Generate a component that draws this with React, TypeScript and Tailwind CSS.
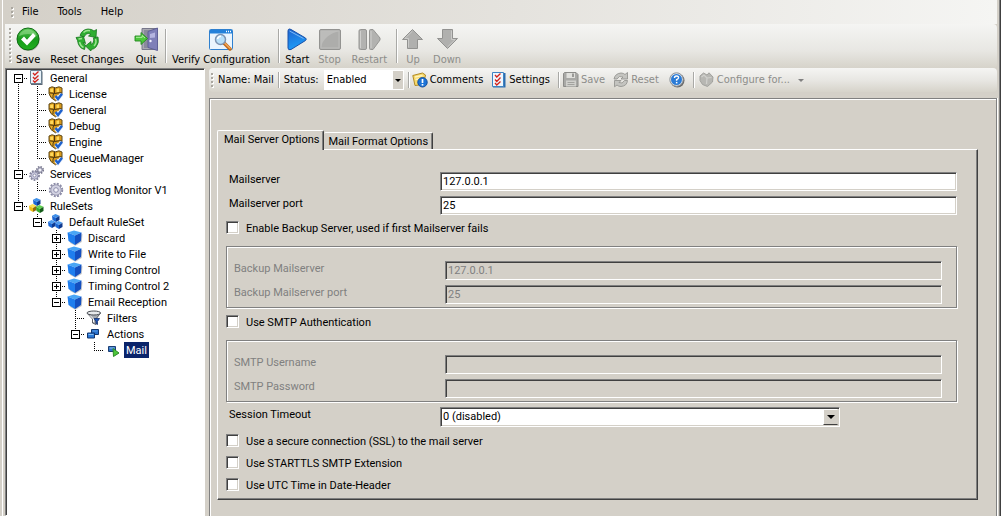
import React from 'react';

type IconProps = { size?: number };

const SaveIcon: React.FC = () => (
  <svg width="24" height="24" viewBox="0 0 24 24" aria-hidden="true">
    <defs>
      <linearGradient id="okGreen" x1="0" y1="0" x2="0" y2="1">
        <stop offset="0" stopColor="#5fc95a" />
        <stop offset="0.5" stopColor="#189a1c" />
        <stop offset="1" stopColor="#22b01f" />
      </linearGradient>
    </defs>
    <circle cx="12.500" cy="13" r="11" fill="#8b8b86" opacity="0.6" />
    <circle cx="12" cy="12" r="11" fill="url(#okGreen)" stroke="#0f6d14" strokeWidth="1" />
    <path d="M3 9 Q5 3 12 2.500 Q19 3 21 9 Q12 5 3 9 Z" fill="#a5e29d" opacity="0.5" />
    <path d="M5 12.500 L8 9.500 L11 12.800 L17 6 L19.800 9 L11 18.500 Z" fill="#fff" />
  </svg>
);

const RecycleIcon: React.FC = () => (
  <svg width="24" height="24" viewBox="0 0 24 24" aria-hidden="true">
    <g transform="translate(1 1)" fill="#2fae31" stroke="#17751d" strokeWidth="0.8" strokeLinejoin="round">
      <path d="M4 7.500 Q6 1.500 12 1 Q16 1 18 3 L20.500 1.500 L20 9.500 L12.500 8 L14.800 6.300 Q10.500 3.800 8 9 Z" />
      <path d="M17.500 9.800 L22 9 Q23.500 15 20 19 Q18 21.200 15 21.500 L15 23.200 L9.500 18 L15 13.500 V16.500 Q18.500 15 17.500 9.800 Z" />
      <path d="M0 9.500 L7.500 8.500 L9.500 15.500 L7 14.500 Q7.500 16.200 9.500 17 L8.500 21.500 Q2.500 20 1.500 12.500 Z" />
    </g>
    <path d="M8.500 5.500 Q11 3 15 3.800 M20.500 12 Q22 16 19 19 M3.500 12 L7 11.500 M4.500 15 Q5.500 19 8.500 20.500" fill="none" stroke="#9be58f" strokeWidth="1.500" />
  </svg>
);

const QuitIcon: React.FC = () => (
  <svg width="24" height="24" viewBox="0 0 24 24" aria-hidden="true">
    <path d="M8 1.500 H23 V22.500 H8 Z" fill="#a9a9b2" stroke="#77778a" />
    <path d="M10 3 H21 V21 H10 Z" fill="#8a8a9c" />
    <path d="M14 4.500 L23.500 1 V23.500 L14 20.500 Z" fill="#7f7fb8" stroke="#5a5a92" strokeWidth="0.900" />
    <path d="M16 7 L21 5.500 V10.500 L16 11 Z" fill="#b5b5e0" />
    <circle cx="16.500" cy="14" r="1.200" fill="#f2f2ff" />
    <path d="M1 9 H7 V5.500 L13.500 11.500 L7 17.500 V14 H1 Z" fill="#4cc63c" stroke="#25881f" strokeWidth="0.900" />
    <path d="M2 10.300 H8.200 V8.500 L11 11" stroke="#b0f0a0" fill="none" />
  </svg>
);

const VerifyIcon: React.FC = () => (
  <svg width="24" height="24" viewBox="0 0 24 24" aria-hidden="true">
    <rect x="0.500" y="2.500" width="23" height="20" rx="1" fill="#eaf5fe" stroke="#2f80cf" />
    <rect x="1" y="3" width="22" height="3.500" fill="#2381da" />
    <path d="M17 4.500 H18 M19 4.500 H20 M21 4.500 H22" stroke="#fff" strokeWidth="1.500" />
    <path d="M15 16 L21 22" stroke="#c06a1c" strokeWidth="3.500" strokeLinecap="round" />
    <path d="M15.500 16 L21 21.300" stroke="#f3a85a" strokeWidth="1.500" strokeLinecap="round" />
    <circle cx="11.500" cy="12.500" r="5" fill="#b7e0fa" stroke="#7d94b2" strokeWidth="1.500" />
    <path d="M8.500 12 Q9 9.500 12 9.300" stroke="#fff" strokeWidth="1.500" fill="none" />
  </svg>
);

const PlayIcon: React.FC = () => (
  <svg width="24" height="24" viewBox="0 0 24 24" aria-hidden="true">
    <defs>
      <linearGradient id="playBlue" x1="0" y1="0" x2="0.300" y2="1">
        <stop offset="0" stopColor="#1f63d0" />
        <stop offset="1" stopColor="#1c9cf8" />
      </linearGradient>
    </defs>
    <path d="M4.500 2 Q3 2 3 4 V21 Q3 23.500 6 22.500 L20.500 13.500 Q22 12 20.500 11 L6 2.500 Z" fill="url(#playBlue)" stroke="#1850a8" />
    <path d="M4.500 4 L18.500 11.500" stroke="#7db8f4" strokeWidth="1" />
  </svg>
);

const StopIcon: React.FC = () => (
  <svg width="24" height="24" viewBox="0 0 24 24" aria-hidden="true">
    <rect x="1.500" y="2.500" width="21" height="20" rx="1.500" fill="#adadab" stroke="#939391" />
    <path d="M3 4 H21 Q6 8 3 20 Z" fill="#bcbcba" />
    <rect x="3" y="4" width="18" height="17" fill="none" stroke="#bdbdbb" />
  </svg>
);

const RestartIcon: React.FC = () => (
  <svg width="24" height="24" viewBox="0 0 24 24" aria-hidden="true">
    <rect x="2" y="2.500" width="7.500" height="20" rx="1.500" fill="#b2b2b0" stroke="#959593" />
    <path d="M13.500 2.500 H16 L23 11 V13 L16 22.500 H13.500 Q12.500 22.500 12.500 21.500 V3.500 Q12.500 2.500 13.500 2.500 Z" fill="#b2b2b0" stroke="#959593" />
    <path d="M3.500 4 V21 M14 4 V21" stroke="#cfcfcd" />
  </svg>
);

const ArrowIcon: React.FC<{ down?: boolean }> = ({ down }) => (
  <svg width="24" height="24" viewBox="0 0 24 24" aria-hidden="true" className={down ? 'rotate-180' : ''}>
    <path d="M11.500 2.500 L21.500 12.500 H16.500 V21.500 H6.500 V12.500 H1.500 Z" fill="#b0b0ae" stroke="#929290" />
    <path d="M11.500 4 L3.800 11.500 H7.500 V20.500" fill="none" stroke="#cbcbc9" />
  </svg>
);

const ChecklistIcon: React.FC<IconProps> = ({ size = 16 }) => (
  <svg width={size} height={size} viewBox="0 0 16 16" aria-hidden="true">
    <path d="M2 1.500 H13.500 V15 H2 Z" fill="#5b6675" />
    <path d="M1.500 0.500 H12.500 V13.500 H1.500 Z" fill="#e9f3fb" stroke="#6b8090" />
    <path d="M4 3 L5.800 5 L9.500 1.500 M4 7 L5.800 9 L9.500 5.500 M4 10.500 L5.800 12.300 L9.500 9" fill="none" stroke="#d3241c" strokeWidth="1.300" />
  </svg>
);

const SettingsIcon: React.FC = () => (
  <svg width="16" height="16" viewBox="0 0 16 16" aria-hidden="true">
    <path d="M2 1 H14.500 V15.500 H2 Z" fill="#2c6cae" />
    <path d="M1.500 0.500 H12.500 V14.500 H1.500 Z" fill="#eef6fd" stroke="#3d83c4" />
    <path d="M4 3 L5.800 5 L9.500 1.500 M4 7.500 L5.800 9.500 L9.500 5.500 M4 11 L5.800 13 L9.500 9.500" fill="none" stroke="#d3241c" strokeWidth="1.300" />
  </svg>
);

const ShieldIcon: React.FC = () => (
  <svg width="16" height="16" viewBox="0 0 16 16" aria-hidden="true">
    <path d="M1 2 L4 0.800 L7.500 1.800 L11 0.800 L14 2 V7.500 Q13.500 12 7.500 14.800 Q1.800 12 1 7.500 Z" fill="#d9991a" stroke="#5f4a1c" />
    <path d="M2.200 3 L5 2.200 V6 H2.200 Z M8.500 3 L11 2.300 V6 H8.500 Z" fill="#ffd95a" />
    <path d="M2.500 8.500 H5 L6 12 Q3 10.500 2.500 8.500 Z" fill="#f0b93a" />
    <path d="M6.500 2 V7 L5 9 V12 M1.500 6.800 L6.500 7.500 L13.500 6.500" fill="none" stroke="#4b3810" strokeWidth="1" />
    <path d="M8 10.500 L10 12.800 L13.800 8" fill="none" stroke="#e8eefa" strokeWidth="4.200" />
    <path d="M7.500 10 L10 13 L14 7.800" fill="none" stroke="#1f62cc" strokeWidth="2.500" />
  </svg>
);

const GearIcon: React.FC = () => (
  <svg width="16" height="16" viewBox="0 0 16 16" aria-hidden="true">
    <circle cx="8" cy="8" r="6.200" fill="none" stroke="#8d8da8" strokeWidth="2" strokeDasharray="2 1.250" />
    <circle cx="8" cy="8" r="5.200" fill="#d2d2e2" stroke="#9a9ab2" />
    <circle cx="8" cy="8" r="2.300" fill="#f4f4fa" stroke="#8f8fac" />
  </svg>
);

const GearsIcon: React.FC = () => (
  <svg width="16" height="16" viewBox="0 0 16 16" aria-hidden="true">
    <circle cx="11" cy="4" r="3.300" fill="none" stroke="#77778c" strokeWidth="1.500" strokeDasharray="1.500 1.100" />
    <circle cx="11" cy="4" r="2.400" fill="#cfcfdd" stroke="#80809a" />
    <circle cx="11" cy="4" r="1" fill="#fff" />
    <circle cx="5.500" cy="9.500" r="4.500" fill="none" stroke="#80809a" strokeWidth="1.800" strokeDasharray="1.800 1.200" />
    <circle cx="5.500" cy="9.500" r="3.600" fill="#cdcde0" stroke="#9494ae" />
    <circle cx="5.500" cy="9.500" r="1.500" fill="#fff" stroke="#8f8fac" />
  </svg>
);

const Cube: React.FC<{ x: number; y: number; top: string; left: string; right: string }> = ({ x, y, top, left, right }) => (
  <g transform={`translate(${x} ${y})`}>
    <path d="M0 1.800 L3.500 0 L7.500 1.800 L4 4 Z" fill={top} />
    <path d="M0 1.800 L4 4 V8 L0.500 6 Z" fill={left} />
    <path d="M7.500 1.800 L4 4 V8 L7.500 6 Z" fill={right} />
  </g>
);

const RuleSetsIcon: React.FC = () => (
  <svg width="16" height="16" viewBox="0 0 16 16" aria-hidden="true">
    <Cube x={4} y={0} top="#3f8fe8" left="#1c68d4" right="#0f3a90" />
    <Cube x={0} y={6} top="#ffe14f" left="#efbd18" right="#8f6a0a" />
    <Cube x={7} y={7} top="#62d150" left="#35ab2c" right="#135c18" />
  </svg>
);

const RuleSetIcon: React.FC = () => (
  <svg width="16" height="16" viewBox="0 0 16 16" aria-hidden="true">
    <Cube x={4} y={0} top="#3f8fe8" left="#1c68d4" right="#0f3a90" />
    <Cube x={0} y={6} top="#4c9bee" left="#1c68d4" right="#0f3a90" />
    <Cube x={7} y={7} top="#4c9bee" left="#1c68d4" right="#0f3a90" />
  </svg>
);

const RuleIcon: React.FC = () => (
  <svg width="16" height="16" viewBox="0 0 16 16" aria-hidden="true">
    <path d="M2 4 L8 7 L15.500 4 L14.800 12 L8.500 15.800 L3 13 Z" fill="#9a9a9a" opacity="0.500" />
    <path d="M0.500 2.500 L7 0.500 L14.500 2.500 L8 5.500 Z" fill="#4aa6f5" />
    <path d="M0.500 2.500 L8 5.500 V15 L1.500 11 Z" fill="#1f7eee" />
    <path d="M14.500 2.500 L8 5.500 V15 L14 11 Z" fill="#1450c0" />
  </svg>
);

const FilterIcon: React.FC = () => (
  <svg width="16" height="16" viewBox="0 0 16 16" aria-hidden="true">
    <path d="M1 3 L6.500 9 V13 L10 14.500 V9 L14.500 3 Z" fill="#a9adb3" stroke="#50545a" strokeWidth="0.900" />
    <ellipse cx="7.800" cy="3" rx="6.800" ry="2" fill="#e8eaec" stroke="#4a4e54" />
    <path d="M4 5.500 L7.500 9 V12" stroke="#fff" fill="none" />
    <path d="M8 8.500 H13.500 L11.500 11.500 V14.500 L10 13.500 V11.500 Z" fill="#1f56b8" stroke="#142f6a" strokeWidth="0.800" />
  </svg>
);

const ActionsIcon: React.FC = () => (
  <svg width="16" height="16" viewBox="0 0 16 16" aria-hidden="true">
    <path d="M5.500 3.500 H12.500 V8.500 H5.500 Z" fill="#2871ce" stroke="#12366f" />
    <path d="M6.500 5 H11.500" stroke="#5a9ce4" />
    <path d="M1.500 7 H8.500 V12 H1.500 Z" fill="#2b79d8" stroke="#12366f" />
    <path d="M2.500 8.500 H7.500" stroke="#86c0f4" />
  </svg>
);

const MailActionIcon: React.FC = () => (
  <svg width="16" height="16" viewBox="0 0 16 16" aria-hidden="true">
    <path d="M3.500 4.500 H10.500 V9.500 H3.500 Z" fill="#2f74c6" stroke="#1c3d73" />
    <path d="M4.500 6 H9.500" stroke="#8cc3f3" />
    <path d="M8 6.500 L14 11 L8.500 14.500 Z" fill="#4cc63a" stroke="#2c8a28" />
  </svg>
);

const CommentsIcon: React.FC = () => (
  <svg width="16" height="16" viewBox="0 0 16 16" aria-hidden="true">
    <path d="M0.800 3.500 L10.500 1 L13.500 3 L11.500 12.500 L3 13.500 Z" fill="#f7d96b" stroke="#b08a25" />
    <path d="M3 5 L10.500 3.500 M3.500 7.500 L7 7" stroke="#fff4bd" strokeWidth="1.300" />
    <circle cx="10.500" cy="10.300" r="4.700" fill="#1d74d8" stroke="#0f4c9c" />
    <path d="M10.500 7 V11" stroke="#fff" strokeWidth="1.700" />
    <path d="M10.500 12 V13.600" stroke="#fff" strokeWidth="1.700" />
  </svg>
);

const DiskIcon: React.FC = () => (
  <svg width="16" height="16" viewBox="0 0 16 16" aria-hidden="true">
    <path d="M1.500 0.500 H13 L15 2.500 V14.500 H0.500 V1.500 Z" fill="#a9a9a6" stroke="#8c8c89" />
    <rect x="3.500" y="1" width="8.500" height="5" fill="#e0e0dc" />
    <rect x="9" y="1.500" width="2" height="3.500" fill="#999996" />
    <rect x="3" y="8.500" width="10" height="6" fill="#d0d0cc" />
    <path d="M4.500 10.500 H11.500 M4.500 12.500 H11.500" stroke="#a2a29e" />
  </svg>
);

const RefreshIcon: React.FC = () => (
  <svg width="16" height="16" viewBox="0 0 16 16" aria-hidden="true">
    <g fill="#c4c4c0" stroke="#8e8e8a" strokeWidth="0.800">
      <path d="M1 7 Q2 1.500 8 1 Q10.500 1 12 2.500 L14.500 0.500 V7 H8 L10 5 Q6 3 4 7 Z" />
      <path d="M14.500 8.500 Q14 14 8 14.500 Q5.500 14.500 4 13 L1.500 14.800 V8.500 H8 L6 10.500 Q9.500 12.500 11.500 8.500 Z" />
    </g>
  </svg>
);

const HelpIcon: React.FC = () => (
  <svg width="16" height="16" viewBox="0 0 16 16" aria-hidden="true">
    <circle cx="8.500" cy="8.500" r="7" fill="#6a6a6a" />
    <circle cx="7.500" cy="7.500" r="6.700" fill="#e4e6e8" stroke="#8c9298" />
    <circle cx="7.500" cy="7.500" r="5.500" fill="#2b7bd6" />
    <path d="M5.500 6 Q5.500 4 7.500 4 Q9.700 4 9.500 5.900 Q9.300 7 7.600 7.600 V8.800" fill="none" stroke="#fff" strokeWidth="1.400" />
    <rect x="6.900" y="9.900" width="1.500" height="1.500" fill="#fff" />
  </svg>
);

const ConfigureIcon: React.FC = () => (
  <svg width="16" height="16" viewBox="0 0 16 16" aria-hidden="true">
    <path d="M1 4 L4.500 1 L8 3 L10 0.800 L14 5 L13.500 10 L8.500 14.500 L3.500 12.500 L1 8.500 Z" fill="#b7b7b3" stroke="#a2a29e" />
    <path d="M2.500 5 L5 3 L8 6 L7.500 12" fill="none" stroke="#d0d0cc" strokeWidth="1.300" />
    <path d="M8 6 L12.500 5.500" stroke="#d0d0cc" strokeWidth="1.200" />
  </svg>
);

const Grip: React.FC<{ dots: number }> = ({ dots }) => (
  <div className="flex flex-col gap-0.5" aria-hidden="true">
    {Array.from({ length: dots }, (_, i) => (
      <span key={i} className="h-0.5 w-0.5 bg-[#aaa7a0] shadow-[1px_1px_0_#ffffff]" />
    ))}
  </div>
);

const Separator: React.FC<{ className: string }> = ({ className }) => (
  <div className={'w-0.5 shrink-0 border-l border-r border-l-[#a9a9a6] border-r-white ' + className} />
);

interface ToolButtonProps {
  label: string;
  icon: React.ReactNode;
  disabled?: boolean;
  narrow?: boolean;
}

const ToolButton: React.FC<ToolButtonProps> = ({ label, icon, disabled, narrow }) => (
  <button
    type="button"
    disabled={disabled}
    className={
      narrow
        ? 'flex flex-col items-center px-[3px] whitespace-nowrap disabled:text-[#8d8d8a]'
        : 'flex flex-col items-center px-[5px] whitespace-nowrap disabled:text-[#8d8d8a]'
    }
  >
    {icon}
    <span className="h-[17px] leading-[17px]">{label}</span>
  </button>
);

const SmallButton: React.FC<ToolButtonProps> = ({ label, icon, disabled }) => (
  <button
    type="button"
    disabled={disabled}
    className="flex items-center gap-0.5 whitespace-nowrap disabled:text-[#8d8d8a]"
  >
    {icon}
    <span>{label}</span>
  </button>
);

// v: full vertical, t: branch, l: last branch, space: nothing
// f / m / e: expanded box (first, middle, end), p: collapsed box
type TreeRow = { cells: string; label: string; icon: React.ReactNode; selected?: boolean };

const treeRows: TreeRow[] = [
  { cells: 'f', label: 'General', icon: <ChecklistIcon /> },
  { cells: 'vt', label: 'License', icon: <ShieldIcon /> },
  { cells: 'vt', label: 'General', icon: <ShieldIcon /> },
  { cells: 'vt', label: 'Debug', icon: <ShieldIcon /> },
  { cells: 'vt', label: 'Engine', icon: <ShieldIcon /> },
  { cells: 'vl', label: 'QueueManager', icon: <ShieldIcon /> },
  { cells: 'm', label: 'Services', icon: <GearsIcon /> },
  { cells: 'vl', label: 'Eventlog Monitor V1', icon: <GearIcon /> },
  { cells: 'e', label: 'RuleSets', icon: <RuleSetsIcon /> },
  { cells: ' e', label: 'Default RuleSet', icon: <RuleSetIcon /> },
  { cells: '  p', label: 'Discard', icon: <RuleIcon /> },
  { cells: '  p', label: 'Write to File', icon: <RuleIcon /> },
  { cells: '  p', label: 'Timing Control', icon: <RuleIcon /> },
  { cells: '  p', label: 'Timing Control 2', icon: <RuleIcon /> },
  { cells: '  e', label: 'Email Reception', icon: <RuleIcon /> },
  { cells: '   t', label: 'Filters', icon: <FilterIcon /> },
  { cells: '   e', label: 'Actions', icon: <ActionsIcon /> },
  { cells: '    l', label: 'Mail', icon: <MailActionIcon />, selected: true },
];

const TreeCell: React.FC<{ kind: string }> = ({ kind }) => (
  <span className="relative h-4 w-[19px] shrink-0" aria-hidden="true">
    {'vtlmep'.includes(kind) && (
      <span className="absolute top-0 left-[9px] h-2 w-px bg-[repeating-linear-gradient(to_bottom,#000_0_1px,transparent_1px_2px)]" />
    )}
    {'vtfmp'.includes(kind) && (
      <span className="absolute top-2 left-[9px] h-2 w-px bg-[repeating-linear-gradient(to_bottom,#000_0_1px,transparent_1px_2px)]" />
    )}
    {'tlfmep'.includes(kind) && (
      <span className="absolute top-2 left-[9px] h-px w-2.5 bg-[repeating-linear-gradient(to_right,#000_0_1px,transparent_1px_2px)]" />
    )}
    {'fmep'.includes(kind) && (
      <span className="absolute top-1 left-[5px] h-[9px] w-[9px] border border-black bg-white">
        <span className="absolute top-[3px] left-px h-px w-[5px] bg-black" />
        {kind === 'p' && <span className="absolute top-px left-[3px] h-[5px] w-px bg-black" />}
      </span>
    )}
  </span>
);

const Tree: React.FC = () => (
  <nav
    aria-label="Configuration"
    className="w-[200px] shrink-0 border border-t-[#808080] border-r-white border-b-white border-l-[#808080] bg-white pt-px pl-px shadow-[inset_1px_1px_0_#404040]"
  >
    <ul className="pl-0.5">
      {treeRows.map((row, i) => (
        <li key={i} className="flex h-4 items-center">
          {row.cells.split('').map((kind, c) => (
            <TreeCell key={c} kind={kind} />
          ))}
          <span className="w-5 shrink-0 pl-px">{row.icon}</span>
          <a
            href="#"
            className={
              row.selected
                ? 'bg-[#0a246a] px-0.5 pt-px leading-[15px] whitespace-nowrap text-white'
                : 'px-0.5 pt-px leading-[15px] whitespace-nowrap'
            }
          >
            {row.label}
          </a>
        </li>
      ))}
    </ul>
  </nav>
);

interface FieldProps {
  id: string;
  label: string;
  value?: string;
  type?: string;
  disabled?: boolean;
}

const Field: React.FC<FieldProps> = ({ id, label, value = '', type = 'text', disabled }) => (
  <div className="flex items-start">
    <label htmlFor={id} className={disabled ? 'w-[211px] shrink-0 leading-[15px] text-[#808080]' : 'w-[211px] shrink-0 leading-[15px]'}>
      {label}
    </label>
    <input
      id={id}
      type={type}
      defaultValue={value}
      disabled={disabled}
      className="h-[19px] min-w-0 flex-1 border border-t-[#808080] border-r-white border-b-white border-l-[#808080] bg-white px-0.5 leading-4 shadow-[inset_1px_1px_0_#404040,inset_-1px_-1px_0_#d4d0c8] outline-none disabled:bg-[#d4d0c8] disabled:text-[#808080]"
    />
  </div>
);

const Checkbox: React.FC<{ label: string }> = ({ label }) => (
  <label className="flex h-4 items-start gap-[7px]">
    <input
      type="checkbox"
      className="mt-px h-[13px] w-[13px] shrink-0 appearance-none border border-t-[#808080] border-r-white border-b-white border-l-[#808080] bg-white shadow-[inset_1px_1px_0_#404040,inset_-1px_-1px_0_#d4d0c8]"
    />
    <span className="leading-[17px]">{label}</span>
  </label>
);

const Group: React.FC<{ label: string; children: React.ReactNode }> = ({ label, children }) => (
  <fieldset
    aria-label={label}
    className="mt-2.5 flex flex-col gap-[5px] border border-[#808080] pt-3.5 pr-3.5 pb-[3px] pl-[7px] shadow-[1px_1px_0_#ffffff,inset_1px_1px_0_#ffffff]"
  >
    {children}
  </fieldset>
);

const MailForm: React.FC = () => (
  <div className="border-t border-r border-b border-l border-t-white border-r-[#404040] border-b-[#404040] border-l-white pt-[22px] pr-5 pb-1.5 pl-2 font-['Roboto','Liberation_Sans',sans-serif] shadow-[inset_-1px_-1px_0_#808080]">
    <div className="flex flex-col gap-[5px] pl-[3px]">
      <Field id="mailserver" label="Mailserver" value="127.0.0.1" />
      <Field id="mailserver-port" label="Mailserver port" value="25" />
    </div>
    <div className="mt-[5px]">
      <Checkbox label="Enable Backup Server, used if first Mailserver fails" />
    </div>
    <Group label="Backup Mailserver">
      <Field id="backup" label="Backup Mailserver" value="127.0.0.1" disabled />
      <Field id="backup-port" label="Backup Mailserver port" value="25" disabled />
    </Group>
    <div className="mt-1.5">
      <Checkbox label="Use SMTP Authentication" />
    </div>
    <Group label="SMTP Authentication">
      <Field id="smtp-user" label="SMTP Username" disabled />
      <Field id="smtp-pass" label="SMTP Password" type="password" disabled />
    </Group>
    <div className="mt-[5px] flex items-start pl-[3px]">
      <label htmlFor="timeout" className="w-[211px] shrink-0 leading-[15px]">
        Session Timeout
      </label>
      <div className="relative w-[400px]">
        <select
          id="timeout"
          className="block h-5 w-full appearance-none border border-t-[#808080] border-r-white border-b-white border-l-[#808080] bg-white px-0.5 leading-[18px] shadow-[inset_1px_1px_0_#404040,inset_-1px_-1px_0_#d4d0c8]"
        >
          <option>0 (disabled)</option>
        </select>
        <span className="pointer-events-none absolute top-0.5 right-0.5 flex h-4 w-[15px] items-center justify-center border border-t-white border-r-[#d4d0c8] border-b-[#404040] border-l-white bg-[#d4d0c8]">
          <span className="border-x-4 border-t-4 border-x-transparent border-t-black" />
        </span>
      </div>
    </div>
    <div className="mt-1.5 flex flex-col gap-1.5">
      <Checkbox label="Use a secure connection (SSL) to the mail server" />
      <Checkbox label="Use STARTTLS SMTP Extension" />
      <Checkbox label="Use UTC Time in Date-Header" />
    </div>
  </div>
);

const App: React.FC = () => {
  return (
    <div className="min-h-screen bg-white pr-0.5 font-['DejaVu_Sans_Condensed','DejaVu_Sans',sans-serif] text-[11px] text-black">
      <div className="flex min-h-screen border-r border-[#404040] bg-[#d4d0c8] pl-0.5">
        <div className="flex min-w-0 flex-1 flex-col border-r border-l border-r-[#808080] border-l-white pr-0.5 pl-0.5">
          <header>
            <nav className="flex h-6 items-center gap-[19px] bg-linear-to-r from-[#d4d0c8] to-[#f5f5f3] pl-1.5">
              <div className="-mr-2.5">
                <Grip dots={3} />
              </div>
              <button type="button">File</button>
              <button type="button">Tools</button>
              <button type="button">Help</button>
            </nav>
            <div className="flex h-11 items-start rounded-r bg-linear-to-b from-[#f5f5f3] via-[#e8e7e3] via-60% to-[#d6d3ca] pt-[3px] pl-1">
              <div className="pt-px">
                <Grip dots={9} />
              </div>
              <ToolButton label="Save" icon={<SaveIcon />} />
              <ToolButton label="Reset Changes" icon={<RecycleIcon />} />
              <ToolButton label="Quit" icon={<QuitIcon />} />
              <Separator className="mt-0.5 ml-0.5 h-[34px]" />
              <ToolButton label="Verify Configuration" icon={<VerifyIcon />} />
              <Separator className="mt-0.5 ml-[3px] h-[34px]" />
              <ToolButton label="Start" icon={<PlayIcon />} />
              <ToolButton label="Stop" icon={<StopIcon />} disabled narrow />
              <div className="w-0.5" />
              <ToolButton label="Restart" icon={<RestartIcon />} disabled />
              <Separator className="mt-0.5 ml-1 h-[34px]" />
              <ToolButton label="Up" icon={<ArrowIcon />} disabled narrow />
              <ToolButton label="Down" icon={<ArrowIcon down />} disabled />
            </div>
          </header>

          <div className="flex flex-1">
            <div className="flex font-['Roboto','Liberation_Sans',sans-serif]">
              <Tree />
            </div>

            <main className="ml-1 flex min-w-0 flex-1 flex-col">
              <div className="flex h-6 items-center rounded bg-linear-to-b from-[#f5f5f3] via-[#e8e7e3] to-[#d6d3ca] pl-0.5">
                <Grip dots={4} />
                <span className="ml-[5px] whitespace-nowrap">Name: Mail</span>
                <Separator className="ml-1 h-4" />
                <label htmlFor="status" className="ml-1">
                  Status:
                </label>
                <div className="relative ml-[5px] w-20">
                  <select id="status" className="block h-5 w-full appearance-none bg-white pl-[3px] leading-5">
                    <option>Enabled</option>
                  </select>
                  <span className="pointer-events-none absolute top-px right-px flex h-[18px] w-2.5 items-center justify-center bg-[#d4d0c8]">
                    <span className="border-x-[3px] border-t-[3px] border-x-transparent border-t-black" />
                  </span>
                </div>
                <Separator className="mr-0.5 ml-1 h-4" />
                <SmallButton label="Comments" icon={<CommentsIcon />} />
                <div className="w-2" />
                <SmallButton label="Settings" icon={<SettingsIcon />} />
                <Separator className="mr-[3px] ml-2 h-4" />
                <SmallButton label="Save" icon={<DiskIcon />} disabled />
                <div className="w-2" />
                <SmallButton label="Reset" icon={<RefreshIcon />} disabled />
                <button type="button" aria-label="Help" className="ml-2.5">
                  <HelpIcon />
                </button>
                <Separator className="mr-1 ml-2 h-4" />
                <SmallButton label="Configure for..." icon={<ConfigureIcon />} disabled />
                <span className="ml-2 border-x-[3px] border-t-[3px] border-x-transparent border-t-[#808080]" />
              </div>

              <div className="mt-1.5 flex-1 border-t border-r border-l border-[#808080] pt-[31px] pr-[18px] pl-[7px] shadow-[1px_0_0_#ffffff,inset_1px_1px_0_#ffffff]">
                <div role="tablist" className="flex items-end">
                  <button
                    type="button"
                    role="tab"
                    aria-selected="true"
                    className="relative -mb-px h-5 rounded-t-xs border-t border-r border-l border-t-white border-r-[#404040] border-l-white bg-[#d4d0c8] pr-1 pl-1.5 font-['Roboto','Liberation_Sans',sans-serif] whitespace-nowrap shadow-[inset_-1px_0_0_#808080]"
                  >
                    Mail Server Options
                  </button>
                  <button
                    type="button"
                    role="tab"
                    aria-selected="false"
                    className="h-[17px] rounded-t-xs border-t border-r border-t-white border-r-[#404040] px-1 pt-px font-['Roboto','Liberation_Sans',sans-serif] whitespace-nowrap shadow-[inset_-1px_0_0_#808080]"
                  >
                    Mail Format Options
                  </button>
                </div>
                <MailForm />
              </div>
            </main>
          </div>
        </div>
      </div>
    </div>
  );
};

export default App;
